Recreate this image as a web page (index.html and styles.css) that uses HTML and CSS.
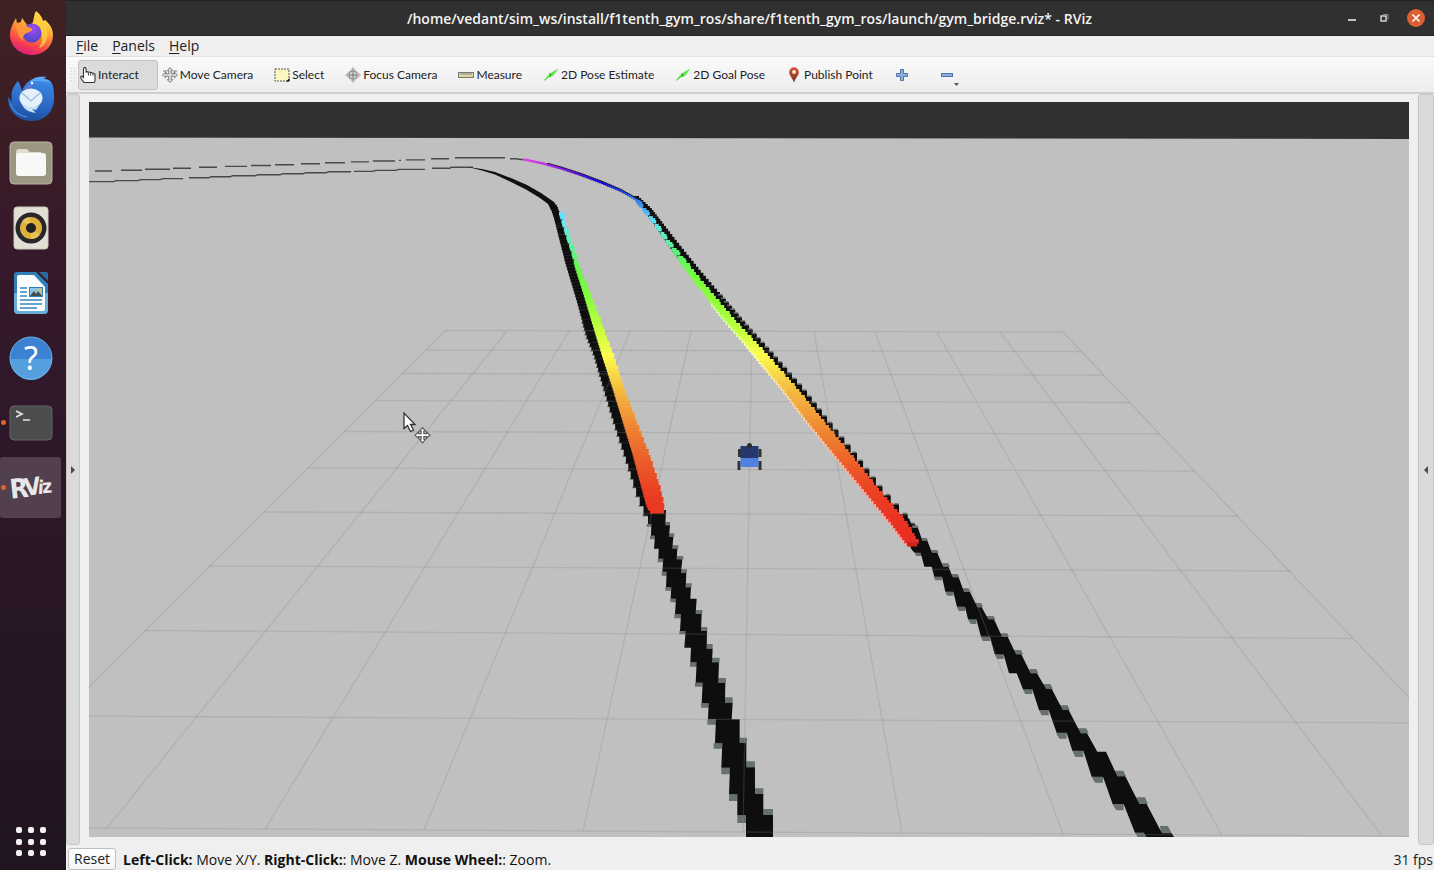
FILE: index.html
```html
<!DOCTYPE html>
<html lang="en">
<head>
<meta charset="utf-8">
<title>gym_bridge.rviz* - RViz</title>
<link rel="stylesheet" href="styles.css">
</head>
<body>
<nav class="dock" aria-label="Applications">
  <div class="dock-apps">
    <button class="app" aria-label="Firefox">
      <svg width="46" height="46" viewBox="0 0 46 46">
        <defs>
          <linearGradient id="ff" x1=".75" y1="0" x2=".35" y2="1"><stop offset="0" stop-color="#fff04f"/><stop offset=".3" stop-color="#ffc23c"/><stop offset=".55" stop-color="#ff7b36"/><stop offset=".8" stop-color="#f53b52"/><stop offset="1" stop-color="#d91f7d"/></linearGradient>
          <radialGradient id="ffg" cx=".55" cy=".3" r=".7"><stop offset="0" stop-color="#a14cf0"/><stop offset="1" stop-color="#4b45c8"/></radialGradient>
        </defs>
        <path fill="url(#ff)" d="M28 1c4 3 6 6 7 10l2-1c5 4 8 9 8 15 0 11-9 20-21 20S2 36 2 25C2 19 5 13 8 8l1 5 4-1 1-4c2 3 4 5 5 7 3-1 5-1 6-3 1-4 1-8 3-11z"/>
        <path fill="#ffcf42" d="M28 2c5 4 6 8 7 11 4 5 6 12 3 18-1 3-4 6-7 7 5-7 4-16-2-20-3-2-4-4-4-6 2-2 2-7 3-10z" opacity=".85"/>
        <circle cx="24" cy="23" r="9.500" fill="url(#ffg)"/>
        <path fill="#ff9838" d="M8 16c5-4 8-2 12 1 2 1 5 1 4 3-2 3-5 2-7 4-2 2-3 4-2 7-4-3-6-9-7-15z"/>
      </svg>
    </button>
    <button class="app" aria-label="Thunderbird">
      <svg width="48" height="48" viewBox="0 0 48 48">
        <defs><linearGradient id="tb" x1=".6" y1="0" x2=".4" y2="1"><stop offset="0" stop-color="#3f8be6"/><stop offset=".6" stop-color="#2a68c4"/><stop offset="1" stop-color="#1d4d9c"/></linearGradient></defs>
        <path fill="url(#tb)" d="M11 7c2 3 3 6 4 10C18 8 27 1 39 3l-2 2c8 0 10 6 10 17 1 14-8 25-22 25C11 47 1 38 1 23l4 5C3 19 6 12 11 7z"/>
        <path fill="#8b6fe0" d="M16 18c3-5 8-9 13-9-5 2-8 6-9 12l-3 3z" opacity=".7"/>
        <path fill="#5ba8f5" d="M23 8c3-4 9-6 16-5l-3 2c3 0 6 1 8 4-6-2-14-3-21-1z"/>
        <circle cx="25" cy="9" r="1.200" fill="#fff"/>
        <ellipse cx="24" cy="24" rx="11.500" ry="9.500" fill="#e4f0fb"/>
        <path fill="#c6e2fa" d="M14 28c4 6 12 7 19 2-1 2-3 4-4 6l-4-1 4 4c-8-1-13-4-15-11z"/>
        <path d="M15 19l9 8 9-8" fill="none" stroke="#9cb9dc" stroke-width="1.300"/>
        <path d="M3 29c3 8 9 13 17 14" fill="none" stroke="#3b8ae0" stroke-width="1.500"/>
      </svg>
    </button>
    <button class="app" aria-label="Files">
      <svg width="44" height="44" viewBox="0 0 44 44">
        <rect x="1" y="1" width="42" height="42" rx="4" fill="#9d9683" stroke="#b9b4a3"/>
        <path d="M7 11q0-3 3-3h8l3 3h11v8H7z" fill="#dedace"/>
        <rect x="7" y="12" width="30" height="23" rx="3" fill="#f8f8f6"/>
      </svg>
    </button>
    <button class="app" aria-label="Rhythmbox">
      <svg width="36" height="44" viewBox="0 0 36 44">
        <rect x="1" y="1" width="34" height="42" rx="3" fill="#e2dfd6" stroke="#cdc9bf"/>
        <circle cx="18" cy="22" r="15.500" fill="#26272b"/>
        <circle cx="18" cy="22" r="11" fill="#dfb13c"/>
        <path d="M18 22L9 15a11 11 0 0 1 7-4zM18 22l9 7a11 11 0 0 1-9 4z" fill="#f0d06a" opacity=".6"/>
        <circle cx="18" cy="22" r="5" fill="#202124"/>
      </svg>
    </button>
    <button class="app" aria-label="LibreOffice Writer">
      <svg width="36" height="44" viewBox="0 0 36 44">
        <path d="M4 1h19l12 12v26q0 4-4 4H5q-4 0-4-4V4q0-3 3-3z" fill="#2f7fb8"/>
        <path d="M1 22h34v17q0 4-4 4H5q-4 0-4-4z" fill="#66afd8"/>
        <path d="M26 1h7q2 0 2 2v7z" fill="#2a6a9e"/>
        <path d="M6 4h15l11 12v22q0 2-2 2H6q-2 0-2-2V6q0-2 2-2z" fill="#fbfcfd"/>
        <path d="M7 17h7M7 21h7M7 25h7M7 29h22M7 33h22M7 37h17" stroke="#3a86bd" stroke-width="1.600"/>
        <rect x="16.500" y="16.500" width="13" height="9" fill="#8ec3e6" stroke="#2f7fb8"/>
        <path d="M17 25l4-5 2 3 2-3 4 5z" fill="#4a4a45"/><circle cx="27" cy="19" r="1.500" fill="#f4c430"/>
      </svg>
    </button>
    <button class="app" aria-label="Help">
      <svg width="44" height="44" viewBox="0 0 44 44">
        <circle cx="22" cy="22" r="21" fill="#3c82d2"/><path d="M1 23a21 21 0 0 0 42 0z" fill="#559fdf"/>
        <circle cx="22" cy="22" r="21" fill="none" stroke="#6db1ea"/>
        <text x="22" y="34" class="help-mark">?</text>
      </svg>
    </button>
    <button class="app running" aria-label="Terminal">
      <svg width="44" height="36" viewBox="0 0 44 36">
        <rect x="1" y="1" width="42" height="34" rx="4" fill="#4c4c4c" stroke="#656565"/>
        <path d="M7 6l6 3-6 3M14 15h7" fill="none" stroke="#e6e6e6" stroke-width="1.600"/>
      </svg>
    </button>
    <button class="app running active" aria-label="RViz">
      <svg width="52" height="52" viewBox="0 0 52 52">
        <g class="rviz-mark">
          <text x="5" y="36" font-size="27" transform="rotate(-6 12 28)">R</text>
          <text x="19" y="33" font-size="24" transform="rotate(-8 27 25)">V</text>
          <text x="33" y="32" font-size="19" transform="rotate(4 36 25)">i</text>
          <text x="37" y="31" font-size="19" transform="rotate(-4 42 25)">z</text>
        </g>
      </svg>
    </button>
  </div>
  <button class="show-apps" aria-label="Show applications">
    <svg width="32" height="32" viewBox="0 0 32 32" fill="#f2f2f2">
      <rect x="1" y="1" width="6" height="6" rx="2"/><rect x="13" y="1" width="6" height="6" rx="2"/><rect x="25" y="1" width="6" height="6" rx="2"/>
      <rect x="1" y="13" width="6" height="6" rx="2"/><rect x="13" y="13" width="6" height="6" rx="2"/><rect x="25" y="13" width="6" height="6" rx="2"/>
      <rect x="1" y="24" width="6" height="6" rx="2"/><rect x="13" y="24" width="6" height="6" rx="2"/><rect x="25" y="24" width="6" height="6" rx="2"/>
    </svg>
  </button>
</nav>

<main class="window">
  <header class="titlebar">
    <h1 class="title">/home/vedant/sim_ws/install/f1tenth_gym_ros/share/f1tenth_gym_ros/launch/gym_bridge.rviz* - RViz</h1>
    <div class="window-controls">
      <button class="control" aria-label="Minimize"><svg width="18" height="18" viewBox="0 0 18 18"><path d="M5 11h8" stroke="#c4c4c4" stroke-width="2"/></svg></button>
      <button class="control" aria-label="Restore"><svg width="18" height="18" viewBox="0 0 18 18" fill="none"><path d="M8 5.500h5v5" stroke="#8c8c8c"/><rect x="6" y="7" width="5" height="5" stroke="#dedede" stroke-width="1.400"/></svg></button>
      <button class="control" aria-label="Close"><svg width="18" height="18" viewBox="0 0 18 18"><circle cx="9" cy="9" r="9" fill="#dd5f34"/><path d="M5.500 5.500l7 7M12.500 5.500l-7 7" stroke="#fff" stroke-width="1.600"/></svg></button>
    </div>
  </header>

  <nav class="menubar" aria-label="Menu">
    <button class="menu"><u>F</u>ile</button>
    <button class="menu"><u>P</u>anels</button>
    <button class="menu"><u>H</u>elp</button>
  </nav>

  <div class="toolbar" role="toolbar" aria-label="Tools">
    <span class="grip"></span>
    <button class="tool selected"><svg width="16" height="16" viewBox="0 0 16 16"><path d="M3.500 9V2q0-1.500 1.200-1.500T6 2v3q1.300-.8 2.200.3 1.300-.6 2.200.3 1.400-.4 2 .5 2-.3 2.600 1.200V14q0 1.500-1.500 1.500H4L1 11.500q-.8-2 .8-2.500L3.500 10.500z" fill="#fff" stroke="#333" stroke-width="1.100"/><path d="M8.400 6V8.500M10.600 6.300V8.500M13 6.700v2" stroke="#333"/></svg>Interact</button>
    <button class="tool"><svg width="16" height="16" viewBox="0 0 16 16"><path d="M8 .6l2.800 3H9.300v3.200h3.200V5.200L15.500 8l-3 2.800V9.300H9.300v3.300h1.500L8 15.500l-2.800-2.900h1.500V9.300H3.500v1.500L.5 8l3-2.800v1.600h3.200V3.600H5.200z" fill="#ddd" stroke="#777" stroke-width=".9"/><path d="M1 4h3v3M15 4h-3v3" fill="none" stroke="#777"/></svg>Move Camera</button>
    <button class="tool"><svg width="16" height="16" viewBox="0 0 16 16"><rect x="1" y="2" width="14" height="12" fill="#fbf7bf" stroke="#555" stroke-dasharray="2 1"/><path d="M15.500 11v3.500H12z" fill="#111"/></svg>Select</button>
    <button class="tool"><svg width="16" height="16" viewBox="0 0 16 16"><path d="M8 .5l2.500 3.200 2.300 1.700L15.500 8l-2.700 2.600-2.300 1.700L8 15.500l-2.500-3.200-2.300-1.700L.5 8l2.700-2.600 2.300-1.700z" fill="#d6d6d6" stroke="#999" stroke-width=".6"/><circle cx="8" cy="8" r="4" fill="none" stroke="#888"/><path d="M8 2v12M2 8h12" stroke="#888"/><circle cx="8" cy="8" r="1.500" fill="#888"/></svg>Focus Camera</button>
    <button class="tool"><svg width="16" height="16" viewBox="0 0 16 16"><rect x=".5" y="5.500" width="15" height="5" fill="#ddd7a2" stroke="#777"/><path d="M3 6v2M5 6v2M7 6v2M9 6v2M11 6v2M13 6v2" stroke="#888"/></svg>Measure</button>
    <button class="tool"><svg width="16" height="16" viewBox="0 0 16 16"><path d="M1 13L6.500 6.500 15.500 1.500 10 9 6.500 10 1.500 14z" fill="#5ee64d"/><path d="M6.500 6.500L8 8l-1.500 2" fill="none" stroke="#2b8a20"/></svg>2D Pose Estimate</button>
    <button class="tool"><svg width="16" height="16" viewBox="0 0 16 16"><path d="M1 13L6.500 6.500 15.500 1.500 10 9 6.500 10 1.500 14z" fill="#5ee64d"/><path d="M6.500 6.500L8 8l-1.500 2" fill="none" stroke="#2b8a20"/></svg>2D Goal Pose</button>
    <button class="tool"><svg width="16" height="16" viewBox="0 0 16 16"><defs><linearGradient id="pin" x1="0" y1="0" x2="0" y2="1"><stop offset="0" stop-color="#e0512f"/><stop offset=".6" stop-color="#984026"/><stop offset="1" stop-color="#4a3526"/></linearGradient></defs><path d="M8 .3a4.800 4.800 0 0 1 4.800 4.800C12.800 9 9.300 11 8 15.800 6.700 11 3.200 9 3.200 5.100A4.800 4.800 0 0 1 8 .3z" fill="url(#pin)"/><circle cx="8" cy="5" r="1.900" fill="#f7eae6"/></svg>Publish Point</button>
    <button class="tool icon-only" aria-label="Add tool"><svg width="16" height="16" viewBox="0 0 16 16"><path d="M6.500 2.500h3v4h4v3h-4v4h-3v-4h-4v-3h4z" fill="#8fafd9" stroke="#4b73ac"/></svg></button>
    <button class="tool icon-only" aria-label="Remove tool"><svg width="24" height="24" viewBox="0 0 24 24"><rect x="4.500" y="10.500" width="11" height="3" fill="#8fafd9" stroke="#4b73ac"/><path d="M17 20h5l-2.500 3z" fill="#555"/></svg></button>
  </div>

  <section class="workspace">
    <button class="panel-handle left" aria-label="Show left panels"><svg width="4" height="8" viewBox="0 0 4 8"><path d="M0 0l4 4-4 4z" fill="#4a4a4a"/></svg></button>
    <div class="viewport">
      <svg class="scene" viewBox="89 102 1320 735" preserveAspectRatio="xMidYMid slice" role="img" aria-label="3D view">
        <rect x="89" y="102" width="1320" height="735" fill="#c0c0c0"/>
        <path d="M89 102H1409V139L89 137.500z" fill="#303030"/>

        <g fill="none" stroke="#484848" stroke-width="1.400">
          <path d="M95 171h17M121 170.300h21M145 169.300h25M173 168.300h18M199 167.300h18M225 166.400h22M251 165.500h20M275 164.700h19M301 163.700h19M325 162.800h20M351 161.900h18M373 161h22M399 160.400h2M406 159.900h19M431 158.700h18M455 157.700h50M510 158.700h6l7 1"/>
          <path d="M89 181.600h25l2-1h22l3-1h19l3-1h20M189 177.700h20l2-1h19l3-1h22l3-1h22l3-1h20l3-1h20l3-1h22M354 171.400h19l3-1h20l3-1h26M432 168.300h18l1-1h22"/>
        </g>
        <path d="M468 167L482 169 495 172 511 178 527 185 541 193 554 202 558 208 551 210 548 204 540 198 526 189.500 510 181.500 495 174.500 482 170.500z" fill="#111"/>

        <g id="walls"></g>

        <g transform="translate(640 500) scale(.3333)">
          <path fill="#66706e" d="M76 66h14v10H76zM87 100h16v10H87zM97 136h18v10H97zM110 168h20v10h-20zM123 208h18v10h-18zM137 250h18v12h-18zM167 330h20v12h-20zM183 381h19v12h-19zM200 432h18v14h-18zM216 473h23v14h-23zM235 534h23v14h-23zM255 592h23v16h-23zM299 713h22v16h-22zM319 784h26v18h-26zM345 865h25v17h-25zM370 927h29v18h-29z
            M20 72h14v8H20zM30 107h17v11H30zM53 176h19v11H53zM65 215h17v12H65zM76 262h19v10H76zM91 296h19v11H91zM103 343h21v12h-21zM118 393h21v10h-21zM150 487h22v13h-22zM165 548h23v12h-23zM183 610h23v13h-23zM202 658h26v16h-26zM221 730h26v16h-26zM244 803h26v20h-26zM267 883h25v20h-25zM292 946h26v23h-26z"/>
          <path fill="#0e0e0e" d="M24 30L78 30 76 76 90 76 87 110 100 110 97 146 112 146 110 178 127 178 123 218 139 218 137 262 153 262 151 296 170 296 167 342 185 342 183 393 201 393 200 446 218 446 216 487 237 487 235 548 256 548 255 608 278 608 275 658 299 658 299 729 319 729 319 802 345 802 345 882 370 882 370 945 399 945 399 1011
            318 1011 318 946 292 946 292 883 270 883 267 883 270 803 244 803 247 730 225 730 228 658 204 658 206 610 185 610 188 548 167 548 170 487 151 487 153 443 133 443 137 393 120 393 123 343 105 343 108 296 92 296 94 262 78 262 80 215 67 215 70 176 55 176 56 146 42 146 45 107 33 107 34 72 24 72z"/>
        </g>
        <g transform="translate(900 520) scale(.3333)">
          <path fill="#66706e" d="M36 16h16l4 8H36zM62 54h18l4 8H62zM94 90h18l4 8H94zM127 130h18l5 11h-23zM154 162h19l5 10h-24zM186 205h20l6 11h-24zM225 249h19l5 13h-24zM258 288h22l7 10h-26zM300 340h22l5 10h-27zM342 390h21l6 13h-25zM388 447h21l6 13h-25zM429 492h22l8 14h-27zM480 556h23l6 14h-27zM534 625h25l7 15h-30zM645 752h25l8 17h-31zM709 832h26l9 20h-33zM780 918h24l15 30h-35z
            M44 98l4 10h18v-12zM101 170l5 11h20v-12zM136 215l5 12h19v-13zM170 260l7 13h18v-14zM204 298l8 14h17v-16zM243 350l5 13h22v-15zM284 403l7 14h20v-16zM368 508l8 14h21v-16zM417 570l8 16h21v-18zM468 638l10 18h22v-20zM517 692l9 19h24v-21zM575 770l10 18h24v-21zM637 852l12 19h22v-21zM705 938l8 13h28v-13z"/>
          <path fill="#0e0e0e" d="M10-12L28-4 38 24 54 24 67 62 82 62 96 98 112 98 130 141 146 141 158 172 176 172 192 216 210 216 232 262 245 262 265 298 282 298 306 350 323 350 348 403 364 403 392 460 411 460 438 506 455 506 488 570 506 570 542 640 561 640 592 695 618 695 652 769 676 769 718 852 740 852 786 940 815 940 822 951
            740 951 732 938 705 938 671 852 638 852 609 770 575 770 550 692 517 692 500 638 470 638 446 570 417 570 397 508 369 508 350 460 327 460 311 403 284 403 270 350 243 350 229 298 204 298 195 260 171 260 160 215 136 215 126 170 103 170 95 140 73 140 62 98 44 98 36 90 0 30z"/>
        </g>

        <g fill="none" stroke="#828282" stroke-opacity=".25" stroke-width="1.300">
          <path d="M445 330.500L1063 332M426 350L1081 351.500M402 373.500L1104 375M375 400.500L1130 402.500M344 431.500L1160 434M307 468L1195 471M263 512L1238 516M209 566L1290 571M145 630.500L1353 638.500M59 716L1435 723M-51 827L1541 837"/>
          <path d="M445 331L-51 827M507 331L107 828M569 331L265 829M630 331L424 830M691 331L583 831M752 331L743 832M814 331L902 833M875 332L1063 834M937 332L1222 835M1000 332L1382 836M1063 332L1541 837"/>
        </g>

        <g id="scan"></g>

        <g class="car">
          <path fill="#333" d="M738 449h3v8h-3zM737.500 461h3v9h-3zM758.500 449h3v8h-3zM758.500 461h3v9h-3z"/>
          <rect x="740.500" y="446" width="18" height="12" fill="#27396c"/>
          <rect x="740.500" y="458" width="18" height="9" fill="#5080e0"/>
          <circle cx="749.500" cy="445.500" r="2.500" fill="#2c2c2e"/>
        </g>

        <g class="pointer">
          <path d="M404 413v15.500l3.500-3 3 6 3-1.500-3-5.500h4.500z" fill="#fff" stroke="#333" stroke-width="1.300"/>
          <path d="M422.500 427.500l3 3.500h-1.700v2.700h2.700V432l3.500 3.200-3.500 3v-1.600h-2.700v2.700h1.700l-3 3.500-3-3.500h1.700v-2.700h-2.700v1.600l-3.500-3 3.500-3.200v1.700h2.700V431h-1.700z" fill="#fff" stroke="#555" stroke-width="1.100"/>
        </g>
      </svg>
    </div>
    <button class="panel-handle right" aria-label="Show right panels"><svg width="4" height="8" viewBox="0 0 4 8"><path d="M4 0L0 4l4 4z" fill="#4a4a4a"/></svg></button>
  </section>

  <footer class="statusbar">
    <button class="reset">Reset</button>
    <p class="hint"><b>Left-Click:</b> Move X/Y. <b>Right-Click:</b>: Move Z. <b>Mouse Wheel:</b>: Zoom.</p>
    <output class="fps">31 fps</output>
  </footer>
</main>
<script src="scene.js"></script>
</body>
</html>
```
FILE: styles.css
```css
* {
  box-sizing: border-box;
}

body {
  margin: 0;
  min-height: 100vh;
  display: flex;
  background: #efefef;
  color: #222;
  font-family: "Open Sans", "Noto Sans", sans-serif;
  font-size: 14px;
}

button {
  margin: 0;
  padding: 0;
  border: 0;
  background: none;
  color: inherit;
  font: inherit;
}

svg {
  display: block;
  flex: none;
}

.dock {
  flex: none;
  width: 66px;
  display: flex;
  flex-direction: column;
  justify-content: space-between;
  padding: 2px 5px 12px 0;
  background: linear-gradient(#402122, #36192a 30%, #2d182a 50%, #201420);
}

.dock-apps {
  display: grid;
  grid-auto-rows: 1fr;
  row-gap: 4px;
  height: 516px;
}

.app {
  position: relative;
  display: flex;
  align-items: center;
  justify-content: center;
  border-radius: 3px;
}

.app.active {
  background: #53404f;
}

.app.running::before {
  content: "";
  position: absolute;
  left: 1px;
  width: 5px;
  height: 5px;
  border-radius: 50%;
  background: #e2622f;
}

.app svg {
  overflow: visible;
}

.help-mark {
  fill: #fff;
  font-family: "Noto Sans", sans-serif;
  font-size: 32px;
  text-anchor: middle;
}

.rviz-mark {
  fill: #e8e8e8;
  font-family: "DejaVu Sans Condensed", "DejaVu Sans", sans-serif;
  font-weight: 700;
}

.show-apps {
  align-self: center;
}

.window {
  flex: 1;
  min-width: 0;
  display: flex;
  flex-direction: column;
}

.titlebar {
  display: grid;
  grid-template-columns: 1fr auto;
  align-items: center;
  height: 36px;
  padding: 0 9px 0 90px;
  background: #303030;
  border-top: 1px solid #222;
  border-bottom: 1px solid #222;
}

.title {
  margin: 0;
  color: #f4f4f4;
  font-size: 14px;
  font-weight: 600;
  text-align: center;
  white-space: nowrap;
}

.window-controls {
  display: flex;
  gap: 14px;
}

.menubar {
  display: flex;
  gap: 14px;
  height: 20px;
  padding: 0 10px;
  line-height: 20px;
}

.menu u {
  text-underline-offset: 2px;
}

.toolbar {
  display: flex;
  align-items: center;
  gap: 2px;
  height: 38px;
  padding: 0 4px;
  background: linear-gradient(#fafafa, #ededed);
  border-top: 1px solid #e0e0e0;
  border-bottom: 2px solid #d0d0d0;
  font-family: Lato, "Open Sans", sans-serif;
  font-size: 12px;
}

.grip {
  width: 6px;
  height: 16px;
  background: radial-gradient(circle, #c8c8c8 1px, transparent 1px) 0 0 / 3px 3px;
}

.tool {
  display: flex;
  align-items: center;
  gap: 2px;
  height: 30px;
  padding: 0 16px 0 1px;
  border: 1px solid transparent;
  border-radius: 3px;
  white-space: nowrap;
}

.tool.selected {
  padding-right: 18px;
  background: #dbdbdb;
  border-color: #c2c2c2;
}

.tool.icon-only {
  padding: 0 22px 0 1px;
}

.workspace {
  flex: 1;
  min-height: 0;
  display: flex;
  gap: 9px;
}

.panel-handle {
  flex: none;
  width: 14px;
  display: flex;
  align-items: center;
  justify-content: center;
  background: #dadada;
  border: 1px solid #c6c6c6;
  border-radius: 3px;
}

.panel-handle.right {
  width: 16px;
}

.viewport {
  position: relative;
  flex: 1;
  min-width: 0;
  margin: 8px 0;
}

.scene {
  position: absolute;
  width: 100%;
  height: 100%;
}

.statusbar {
  display: flex;
  align-items: center;
  gap: 7px;
  height: 25px;
  padding: 3px 1px 0 2px;
}

.reset {
  height: 22px;
  padding: 0 5px;
  background: linear-gradient(#fff, #f4f4f4);
  border: 1px solid #c0c0c0;
  border-radius: 3px;
  line-height: 20px;
}

.hint {
  flex: 1;
  margin: 0;
  color: #111;
}
```
FILE: scene.js
```js
const NS = "http://www.w3.org/2000/svg";

function lerp(table, y) {
  let i = 1;
  while (i < table.length - 1 && table[i][0] < y) i++;
  const a = table[i - 1], b = table[i];
  const t = Math.min(1, Math.max(0, (y - a[0]) / (b[0] - a[0])));
  return a.map((v, k) => v + (b[k] - v) * t);
}

function block(group, x, y, w, h, fill) {
  const r = document.createElementNS(NS, "rect");
  r.setAttribute("x", x.toFixed(1));
  r.setAttribute("y", y.toFixed(1));
  r.setAttribute("width", w.toFixed(1));
  r.setAttribute("height", h.toFixed(1));
  r.setAttribute("fill", fill);
  group.appendChild(r);
}

// Each wall row: y, left edge, right edge, cell height.
const leftWall = [
  [205, 550, 557, 2], [217, 554, 562, 2], [260, 565, 575, 3], [300, 577, 588, 3], [333, 586, 598, 4],
  [353, 594, 605, 4], [387, 604, 615, 5], [420, 614, 625, 6], [453, 625, 636, 7],
  [487, 636, 648, 9], [512, 646, 665, 10]
];
const rightWall = [
  [196, 633, 639, 2], [207, 643, 651, 2], [240, 666, 677, 3], [270, 688, 701, 3], [320, 733, 744, 4],
  [353, 763, 774, 5], [387, 790, 804, 6], [420, 815, 830, 7], [453, 842, 857, 8],
  [487, 868, 883, 9], [520, 897, 913, 10], [535, 908, 921, 10]
];

// Each scan row: y, left edge, right edge, red, green, blue.
const leftScan = [
  [212, 559, 564, 97, 223, 251], [222, 562, 565, 97, 235, 240], [235, 566, 570, 98, 240, 190], [250, 571, 575, 92, 242, 140],
  [265, 575, 579, 104, 245, 74], [290, 583, 589, 125, 250, 60], [310, 589, 597, 160, 255, 65],
  [330, 595, 604, 200, 255, 62], [353, 602, 613, 253, 253, 76], [387, 613, 624, 244, 190, 66],
  [420, 623, 636, 239, 140, 52], [453, 633, 649, 236, 100, 44], [487, 642, 660, 234, 66, 36],
  [505, 647, 664, 234, 56, 34], [512, 652, 662, 234, 56, 34]
];
const rightScan = [
  [200, 636, 640, 50, 130, 240], [210, 644, 648, 70, 180, 245], [220, 652, 656, 95, 225, 240],
  [240, 666, 670, 92, 240, 175], [253, 675, 681, 92, 242, 110], [275, 691, 698, 120, 255, 60],
  [300, 711, 719, 145, 255, 58], [320, 727, 736, 175, 255, 62], [337, 742, 752, 215, 255, 66],
  [353, 755, 767, 253, 253, 76], [387, 783, 797, 243, 190, 66], [420, 808, 824, 240, 145, 54],
  [453, 835, 851, 237, 105, 44], [487, 863, 878, 235, 66, 36], [520, 890, 906, 234, 50, 34],
  [540, 905, 918, 232, 46, 34], [546, 911, 916, 150, 20, 20]
];

function drawWall(group, table, end, leftLip) {
  let y = table[0][0];
  while (y < end) {
    const [, l, r, h] = lerp(table, y);
    const lip = h > 3.500 ? 1.500 : 0;
    if (lip && leftLip) block(group, l - 1, y + h - 0.500, 6, lip, "#66706e");
    if (lip && !leftLip) block(group, r - 5, y - lip, 4.500, lip + 0.500, "#66706e");
    block(group, l, y, r - l, h + 0.300, "#0e0e0e");
    y += h;
  }
}

function drawScan(group, table, end, halo) {
  let y = table[0][0], i = 0;
  while (y < end) {
    const [, l, r, cr, cg, cb] = lerp(table, y);
    const h = y < 260 ? 3 : 4;
    const wobble = [0, 0.800, 0.200, 1.300][i++ % 4];
    if (halo && y > 300) {
      const pale = [cr, cg, cb].map(v => Math.round(v * 0.400 + 150));
      block(group, l - 1.500, y + 1, 5, h, `rgb(${pale})`);
    }
    const gap = y < 260 && i % 4 === 0;
    if (!gap) block(group, l, y, r - l + wobble, h + 0.500, `rgb(${Math.round(cr)},${Math.round(cg)},${Math.round(cb)})`);
    y += h - 1;
  }
}

function drawFarCurve(group) {
  const curve = [
    [523, 159, 225, 60, 235], [540, 162.500, 200, 50, 235], [560, 168, 140, 30, 230], [580, 174.500, 80, 20, 225],
    [600, 182, 20, 10, 225], [620, 190.500, 30, 70, 225], [640, 202, 50, 140, 240]
  ];
  for (let x = 523; x < 640; x += 2) {
    const [, y, r, g, b] = lerp(curve, x);
    const dark = (x - 523) / 60;
    if (x > 545) block(group, x, y - 1.400, 2.500, 1.500 + Math.min(1, dark), "#151528");
    block(group, x, y - 0.600, 2.500, 2.300, `rgb(${Math.round(r)},${Math.round(g)},${Math.round(b)})`);
  }
}

const walls = document.getElementById("walls");
const scan = document.getElementById("scan");
drawWall(walls, leftWall, 512, true);
drawWall(walls, rightWall, 530, false);
drawFarCurve(scan);
drawScan(scan, leftScan, 511, false);
drawScan(scan, rightScan, 545, true);
```
